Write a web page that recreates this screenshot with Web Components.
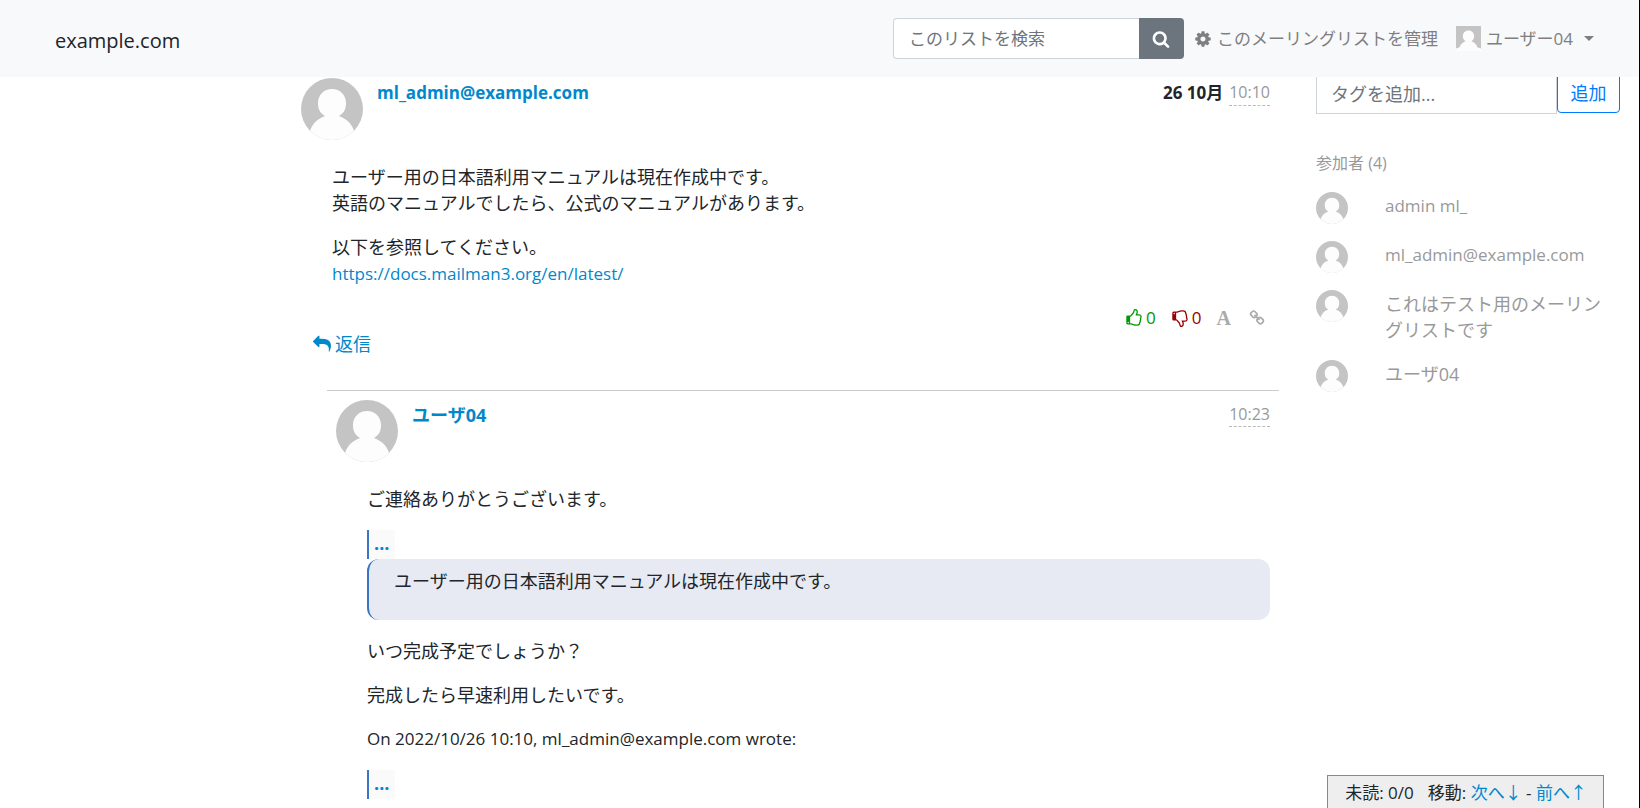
<!DOCTYPE html>
<html lang="ja">
<head>
<meta charset="utf-8">
<meta name="viewport" content="width=device-width, initial-scale=1">
<title>example.com</title>
<style>
  body {
    margin: 0;
    font: 18px/26px "Open Sans", "Noto Sans CJK JP", sans-serif;
    color: #212529;
    background: #fff;
  }
  /* Latin text is set one step smaller so that it sits evenly beside the kana. */
  p[lang="en"], a[lang="en"] { font-size: 17px; }
  mail-message a { color: #08c; text-decoration: none; }
</style>
</head>
<body>
<list-page>
  <site-header slot="header"></site-header>

  <mail-message author="ml_admin@example.com" author-lang="en" date="26 10月" time="10:10" actions>
    <p>ユーザー用の日本語利用マニュアルは現在作成中です。<br>英語のマニュアルでしたら、公式のマニュアルがあります。</p>
    <p>以下を参照してください。<br><a lang="en" href="https://docs.mailman3.org/en/latest/">https://docs.mailman3.org/en/latest/</a></p>
  </mail-message>

  <mail-message author="ユーザ04" time="10:23" reply>
    <p>ご連絡ありがとうございます。</p>
    <quoted-text open>ユーザー用の日本語利用マニュアルは現在作成中です。</quoted-text>
    <p>いつ完成予定でしょうか？</p>
    <p>完成したら早速利用したいです。</p>
    <p lang="en">On 2022/10/26 10:10, ml_admin@example.com wrote:</p>
    <quoted-text></quoted-text>
  </mail-message>

  <tag-form slot="side"></tag-form>
  <participant-list slot="side" count="4">
    <participant-item lang="en">admin ml_</participant-item>
    <participant-item lang="en">ml_admin@example.com</participant-item>
    <participant-item>これはテスト用のメーリングリストです</participant-item>
    <participant-item>ユーザ04</participant-item>
  </participant-list>

  <unread-bar slot="footer"></unread-bar>
</list-page>

<script>
const ICONS = {
  search: '<path d="M1216 832q0-185-131.5-316.5t-316.5-131.5-316.5 131.5-131.5 316.5 131.5 316.5 316.5 131.5 316.5-131.5 131.5-316.5zm512 832q0 52-38 90t-90 38q-54 0-90-38l-343-342q-179 124-399 124-143 0-273.5-55.5t-225-150-150-225-55.5-273.5 55.5-273.5 150-225 225-150 273.5-55.5 273.5 55.5 225 150 150 225 55.5 273.5q0 220-124 399l343 343q37 37 37 90z"/>',
  cog: '<path d="M1152 896q0-106-75-181t-181-75-181 75-75 181 75 181 181 75 181-75 75-181zm512-109v222q0 12-8 23t-20 13l-185 28q-19 54-39 91 35 50 107 138 10 12 10 25t-9 23q-27 37-99 108t-94 71q-12 0-26-9l-138-108q-44 23-91 38-16 136-29 186-7 28-36 28h-222q-14 0-24.5-8.5t-11.5-21.5l-28-184q-49-16-90-37l-141 107q-10 9-25 9-14 0-25-11-126-114-165-168-7-10-7-23 0-12 8-23 15-21 51-66.5t54-70.5q-27-50-41-99l-183-27q-13-2-21-12.5t-8-23.5v-222q0-12 8-23t19-13l186-28q14-46 39-92-40-57-107-138-10-12-10-24 0-10 9-23 26-36 98.5-107.5t94.5-71.5q13 0 26 10l138 107q44-23 91-38 16-136 29-186 7-28 36-28h222q14 0 24.5 8.5t11.5 21.5l28 184q49 16 90 37l142-107q9-9 24-9 13 0 25 10 129 119 165 170 7 8 7 22 0 12-8 23-15 21-51 66.5t-54 70.5q26 50 41 98l183 28q13 2 21 12.5t8 23.5z"/>',
  reply: '<path transform="matrix(-1 0 0 1 1792 0)" d="M1792 640q0 26-19 45l-512 512q-19 19-45 19t-45-19-19-45v-256h-224q-98 0-175.5 6t-154 21.5-133 42.5-105.5 69.5-80 101-48.5 138.5-17.5 181q0 55 5 123 0 6 2.5 23.5t2.5 26.5q0 15-8.5 25t-23.5 10q-16 0-28-17-7-9-13-22t-13.5-30-10.5-24q-127-285-127-451 0-199 53-333 162-403 875-403h224v-256q0-26 19-45t45-19 45 19l512 512q19 19 19 45z"/>',
  up: '<path d="M384 1344q0-26-19-45t-45-19-45 19-19 45 19 45 45 19 45-19 19-45zm1152-576q0-51-39-89.5t-89-38.5h-352q0-58 48-159.5t48-160.5q0-98-32-145t-128-47q-26 26-38 85t-30.5 125.5-59.5 109.5q-22 23-77 91-4 5-23 30t-31.5 41-34.5 42.5-40 44-38.5 35.5-40 27-35.5 9h-32v640h32q13 0 31.5 3t33 6.5 38 11 35 11.5 35.5 12.5 29 10.5q211 73 342 73h121q192 0 192-167 0-26-5-56 30-16 47.5-52.5t17.5-73.5-18-69q53-50 53-119 0-25-10-55.5t-25-47.5q32-1 53.5-47t21.5-81zm128-1q0 89-49 163 9 33 9 69 0 77-38 144 3 21 3 43 0 101-60 178 1 139-85 219.5t-227 80.5h-129q-96 0-189.5-22.5t-216.5-65.5q-116-40-138-40h-288q-53 0-90.5-37.5t-37.5-90.5v-640q0-53 37.5-90.5t90.5-37.5h274q36-24 137-155 58-75 107-128 24-25 35.5-85.5t30.5-126.5 62-108q39-37 90-37 84 0 151 32.5t102 101.5 35 186q0 93-48 192h176q104 0 180 76t76 179z"/>',
  link: '<path d="M1520 1216q0-40-28-68l-208-208q-28-28-68-28-42 0-72 32 3 3 19 18.5t21.5 21.5 15 19 13 25.5 3.5 27.5q0 40-28 68t-68 28q-15 0-27.5-3.5t-25.5-13-19-15-21.5-21.5-18.5-19q-33 31-33 73 0 40 28 68l206 207q27 27 68 27 40 0 68-26l147-146q28-28 28-67zm-703-705q0-40-28-68l-206-207q-28-28-68-28-39 0-68 27l-147 146q-28 28-28 67 0 40 28 68l208 208q27 27 68 27 42 0 72-31-3-3-19-18.5t-21.5-21.5-15-19-13-25.5-3.5-27.5q0-40 28-68t68-28q15 0 27.5 3.5t25.5 13 19 15 21.5 21.5 18.5 19q33-31 33-73zm895 705q0 120-85 203l-147 146q-83 83-203 83-121 0-204-85l-206-207q-83-83-83-203 0-123 88-209l-88-88q-86 88-208 88-120 0-204-84l-208-208q-84-84-84-204t85-203l147-146q83-83 203-83 121 0 204 85l206 207q83 83 83 203 0 123-88 209l88 88q86-88 208-88 120 0 204 84l208 208q84 84 84 204z"/>'
};
ICONS.down = '<g transform="matrix(1 0 0 -1 0 1792)">' + ICONS.up + '</g>';

class Base extends HTMLElement {
  connectedCallback() {
    if (this.shadowRoot) return;
    this.attachShadow({ mode: 'open' }).innerHTML =
      '<style>*,*::before,*::after{box-sizing:border-box}a{color:#08c;text-decoration:none}button,input{font:inherit}</style>' + this.render();
  }
}

customElements.define('fa-icon', class extends Base {
  render() {
    return `<style>:host{display:block;flex:none;width:18px;height:18px}svg{display:block;width:100%;height:100%;fill:currentColor}</style>
      <svg viewBox="0 0 1792 1792" aria-hidden="true">${ICONS[this.getAttribute('name')]}</svg>`;
  }
});

customElements.define('user-avatar', class extends Base {
  render() {
    return `<style>
      :host{display:block;flex:none;width:62px;height:62px;border-radius:50%;overflow:hidden}
      svg{display:block;width:100%;height:100%}</style>
      <svg viewBox="0 0 62 62" aria-hidden="true"><path fill="#c4c4c4" d="M0 0h62v62H0z"/>
        <path fill="#fdfdfd" d="M31 11c8 0 14 6 14 14 0 6-2 10-7 13 8 3 13 8 15 15l9 3v6H0v-6l9-3c2-7 7-12 15-15-5-3-7-7-7-13 0-8 6-14 14-14z"/></svg>`;
  }
});

customElements.define('site-header', class extends Base {
  render() {
    return `<style>
      :host{display:block;position:fixed;top:0;left:0;right:1px;z-index:2;background:#f8f9fb}
      nav{display:flex;align-items:center;height:77px;padding:0 45px 0 55px}
      .brand{font-size:20px;color:#212529;margin-right:auto;padding-top:4px}
      form{display:flex;height:41px;margin-right:10px}
      input{width:246px;min-width:0;padding:0 15px;border:1px solid #ced4da;border-right:0;border-radius:4px 0 0 4px;background:#fff;color:#495057;font-size:17px}
      input::placeholder{color:#6c757d;opacity:1}
      form button{width:45px;padding:0;border:0;border-radius:0 4px 4px 0;background:#6c757d;color:#fff;display:grid;place-items:center}
      .manage,.user{display:flex;align-items:center;gap:5px;color:#7f7f7f;white-space:nowrap;font-size:17px;line-height:26px}
      .user{margin-left:18px;padding:0;border:0;background:none}
      user-avatar{width:25px;height:25px;border-radius:0}
      .caret{margin-left:6px;border:5px solid transparent;border-top-color:currentColor;border-bottom:0}
      </style>
      <nav>
        <a class="brand" href="#">example.com</a>
        <form role="search">
          <input type="search" aria-label="このリストを検索" placeholder="このリストを検索">
          <button type="button" aria-label="検索"><fa-icon name="search"></fa-icon></button>
        </form>
        <a class="manage" href="#"><fa-icon name="cog"></fa-icon>このメーリングリストを管理</a>
        <button class="user" type="button"><user-avatar></user-avatar><span>ユーザー04</span><span class="caret"></span></button>
      </nav>`;
  }
});

customElements.define('mail-message', class extends Base {
  render() {
    const date = this.getAttribute('date');
    return `<style>
      :host{display:block;padding:5px 9px 0}
      :host([reply]){margin:33px 0 0 35px;border-top:1px solid #ccc;padding-top:9px}
      header{display:flex;align-items:flex-start;gap:14px}
      .author{margin-top:2px;font-weight:700}
      .author:lang(en){font-size:17px}
      .when{margin:2px 0 0 auto;display:flex;gap:6px}
      b{font-size:17px}
      time{color:#999;font-size:16px;line-height:24px;border-bottom:1px dashed #bbb}
      .body{padding:24px 0 0 31px}
      ::slotted(p){margin:0 0 18px}
      .votes{display:flex;justify-content:flex-end;align-items:center;padding-right:5px;font-size:17px}
      .votes a{display:flex;align-items:center;gap:3px;margin-left:15px}
      .votes .up{color:#090}.votes .down{color:#900}.votes .tool{color:#aaa}
      .votes .font{font:700 20px/26px "Liberation Serif",serif}
      .votes .link{margin-left:18px}
      .tool fa-icon{width:16px;height:16px}
      .reply{display:flex;width:fit-content;align-items:center;gap:4px;margin-left:12px}
      </style>
      <article>
        <header><user-avatar></user-avatar><a class="author" lang="${this.getAttribute('author-lang') || 'ja'}" href="#">${this.getAttribute('author')}</a>
          <div class="when">${date ? `<b>${date}</b>` : ''}<time>${this.getAttribute('time')}</time></div></header>
        <div class="body"><slot></slot></div>
        ${this.hasAttribute('actions') ? `
        <div class="votes">
          <a class="up" href="#"><fa-icon name="up"></fa-icon>0</a>
          <a class="down" href="#"><fa-icon name="down"></fa-icon>0</a>
          <a class="tool font" href="#">A</a>
          <a class="tool link" href="#" aria-label="リンク"><fa-icon name="link"></fa-icon></a>
        </div>
        <a class="reply" href="#"><fa-icon name="reply"></fa-icon>返信</a>` : ''}
      </article>`;
  }
});

customElements.define('quoted-text', class extends Base {
  render() {
    return `<style>
      :host{display:block;margin-bottom:18px}
      .toggle{display:block;width:28px;height:29px;padding-left:5px;border-left:2px solid #3a75c4;background:#fafafa;font-weight:700}
      blockquote{margin:0;padding:9px 25px 26px;border-left:2px solid #3a75c4;border-radius:12px;background:#e7eaf2}
      </style>
      <a class="toggle" href="#">...</a>${this.hasAttribute('open') ? '<blockquote><slot></slot></blockquote>' : ''}`;
  }
});

customElements.define('tag-form', class extends Base {
  render() {
    return `<style>
      :host{display:block}
      form{display:flex}
      input{flex:1;min-width:0;height:41px;padding:0 14px;border:1px solid #ced4da;background:#fff}
      input::placeholder{color:#6c757d;opacity:1}
      button{width:63px;height:40px;padding:0;border:1px solid #007bff;border-radius:4px;background:#fff;color:#007bff}
      </style>
      <form><input type="text" aria-label="タグを追加" placeholder="タグを追加..."><button type="button">追加</button></form>`;
  }
});

customElements.define('participant-list', class extends Base {
  render() {
    return `<style>
      :host{display:block;margin-top:36px;color:#999}
      h2{margin:0 0 16px;font-size:16px;line-height:26px;font-weight:400}
      .list{display:grid;gap:17px}
      </style>
      <h2>参加者 (${this.getAttribute('count')})</h2><div class="list" role="list"><slot></slot></div>`;
  }
});

customElements.define('participant-item', class extends Base {
  render() {
    return `<style>
      :host{display:flex;align-items:flex-start;gap:37px;padding-right:16px}
      :host(:lang(en)){font-size:17px}
      user-avatar{width:32px;height:32px}
      span{padding-top:1px}
      </style><user-avatar></user-avatar><span><slot></slot></span>`;
  }
});

customElements.define('unread-bar', class extends Base {
  render() {
    return `<style>
      :host{display:flex;position:fixed;right:36px;bottom:0;z-index:1;padding:4px 16px 2px 17px;border:1px solid #888;border-bottom:0;background:#eee;white-space:nowrap;font-size:17px;gap:14px}
      </style><span>未読: 0/0</span><span>移動: <a href="#">次へ↓</a> - <a href="#">前へ↑</a></span>`;
  }
});

customElements.define('list-page', class extends Base {
  render() {
    return `<style>
      :host{display:block;min-height:100vh;border-right:1px solid #000}
      main{display:grid;grid-template-columns:255px minmax(0,1fr) 304px;column-gap:37px;padding:73px 19px 0 0}
      .thread{grid-column:2}
      </style>
      <slot name="header"></slot>
      <main><section class="thread"><slot></slot></section><aside><slot name="side"></slot></aside></main>
      <slot name="footer"></slot>`;
  }
});
</script>
</body>
</html>
